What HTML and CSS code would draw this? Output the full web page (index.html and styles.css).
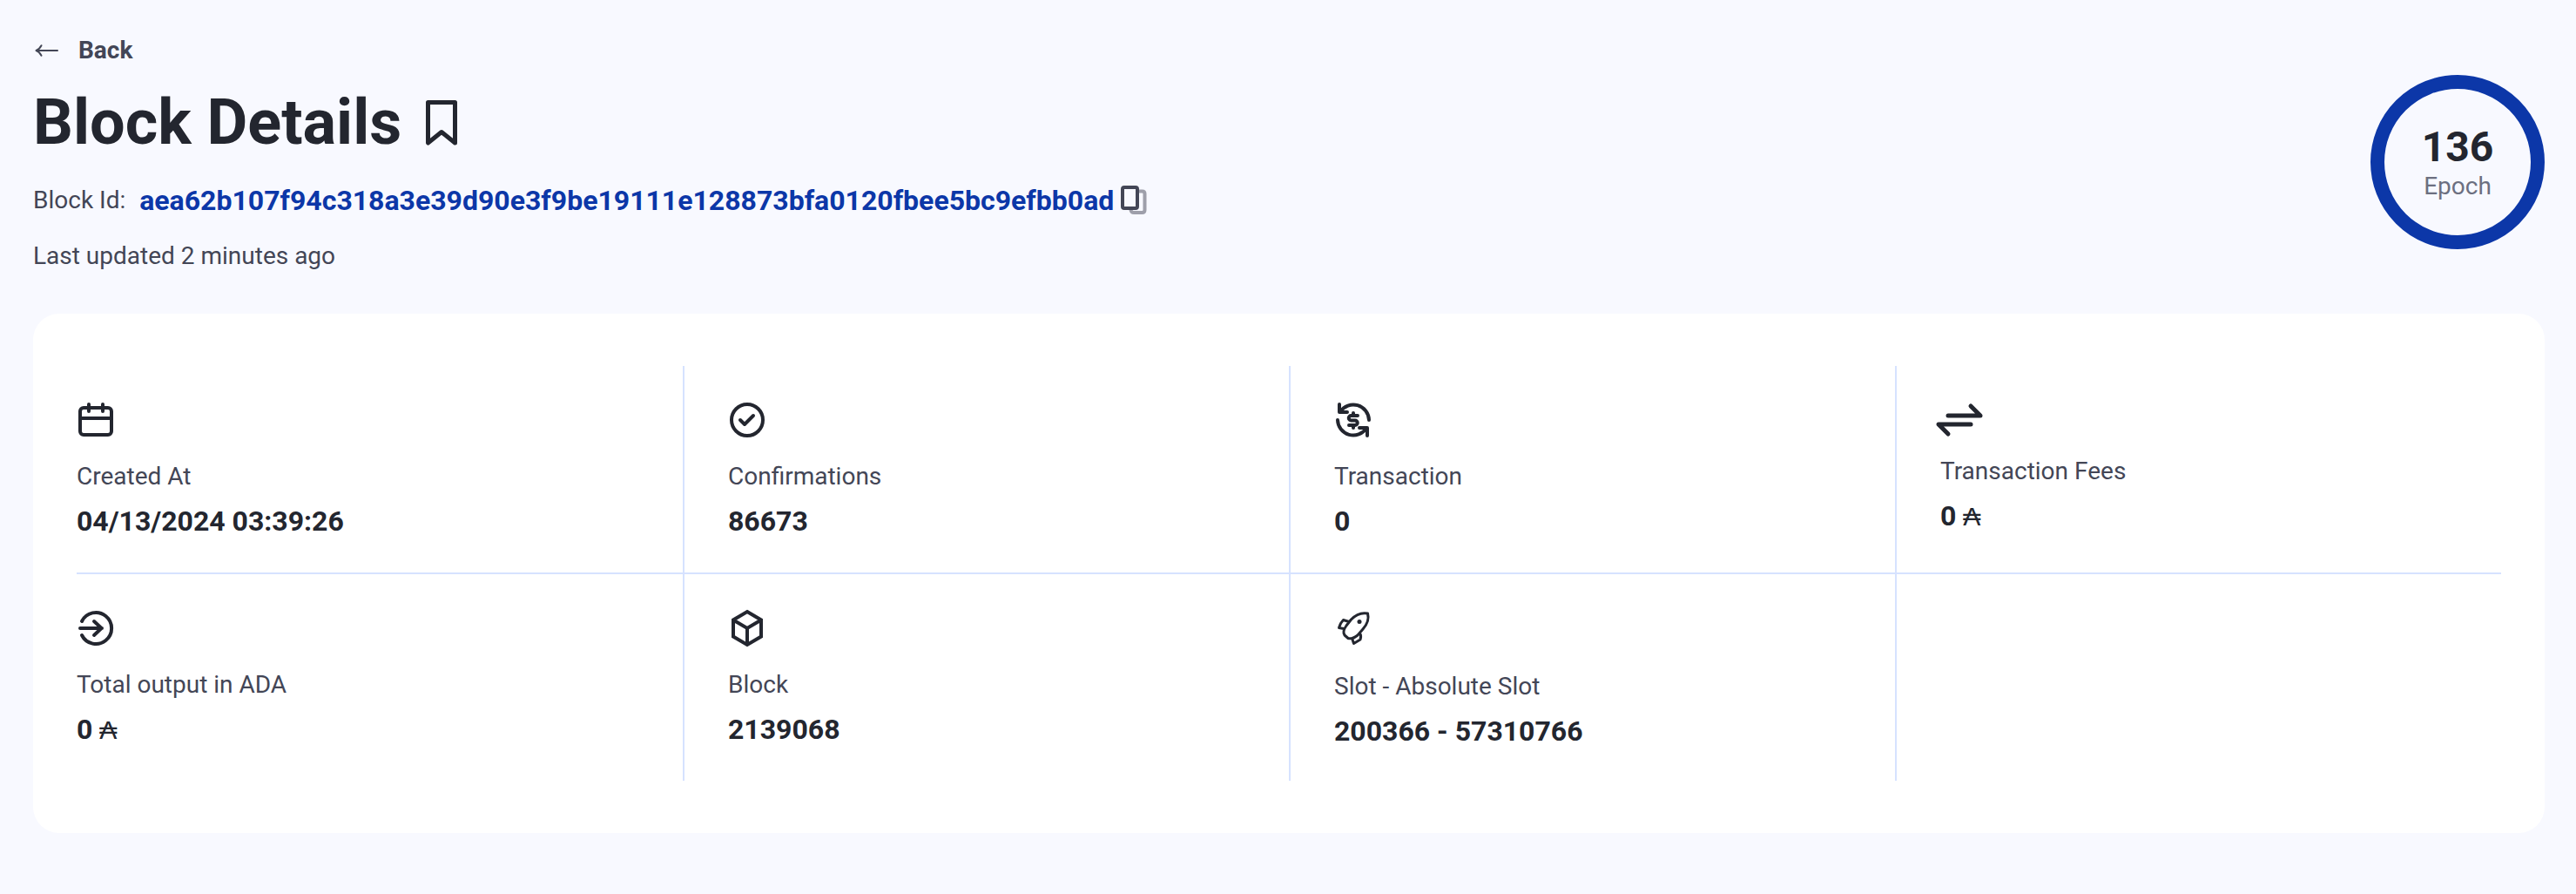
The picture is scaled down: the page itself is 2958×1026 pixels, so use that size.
FILE: index.html
```html
<!DOCTYPE html>
<html lang="en">
<head>
<meta charset="utf-8">
<meta name="viewport" content="width=device-width, initial-scale=1">
<title>Block Details</title>
<link rel="stylesheet" href="styles.css">
</head>
<body>
<main class="page">
  <header class="header">
    <div class="summary">
      <button class="back" type="button">
        <svg class="back-icon" viewBox="0 0 30 14" aria-hidden="true"><path d="M28 7H4M9.500 1.200C8 4 6 6.200 3.500 7C6 7.800 8 10 9.500 12.800"/></svg>
        Back
      </button>
      <div class="title-row">
        <h1 class="title">Block Details</h1>
        <button class="bookmark" type="button" aria-label="Bookmark">
          <svg class="bookmark-icon" viewBox="0 0 36 52"><path d="M2.500 2.500H33.500V49L18 36.500L2.500 49Z"/></svg>
        </button>
      </div>
      <div class="id-row">
        <span class="id-label">Block Id:</span>
        <a class="hash" href="#">aea62b107f94c318a3e39d90e3f9be19111e128873bfa0120fbee5bc9efbb0ad</a>
        <button class="copy" type="button" aria-label="Copy">
          <svg class="copy-icon" viewBox="0 0 30 34"><path class="copy-rear" d="M21 6.500H24.500Q27.500 6.500 27.500 9.500V28Q27.500 31 24.500 31H15Q12 31 11.500 28"/><rect x="2" y="2" width="17" height="24" rx="2"/></svg>
        </button>
      </div>
      <p class="updated">Last updated 2 minutes ago</p>
    </div>
    <div class="epoch">
      <a class="epoch-number" href="#">136</a>
      <span class="epoch-label">Epoch</span>
    </div>
  </header>

  <section class="card">
    <div class="cell">
      <svg class="icon" viewBox="0 0 44 44" aria-hidden="true"><rect x="4" y="8" width="36" height="31" rx="4"/><path d="M4 20H40M14 4V12M30 4V12"/></svg>
      <span class="label">Created At</span>
      <strong class="value">04/13/2024 03:39:26</strong>
    </div>
    <div class="cell">
      <svg class="icon" viewBox="0 0 44 44" aria-hidden="true"><circle cx="22" cy="22" r="18"/><path d="M14 22L19 27L29 17"/></svg>
      <span class="label">Confirmations</span>
      <strong class="value">86673</strong>
    </div>
    <div class="cell">
      <svg class="icon" viewBox="0 0 44 44" aria-hidden="true"><path d="M6 4V13H15M7 12.500A18 18 0 0 1 40 22M38 40V31H29M37 31.500A18 18 0 0 1 4 22"/><path d="M27 17H19.500A2.700 2.700 0 0 0 19.500 22.500H24A2.700 2.700 0 0 1 24 28H17M22 14V17M22 28V31"/></svg>
      <span class="label">Transaction</span>
      <strong class="value">0</strong>
    </div>
    <div class="cell">
      <svg class="icon icon-fees" viewBox="0 0 44 38" aria-hidden="true"><path d="M9 17H46L35 6M35 27H-2L9 38"/></svg>
      <span class="label">Transaction Fees</span>
      <strong class="value">0 <span class="ada">₳</span></strong>
    </div>
    <div class="cell">
      <svg class="icon" viewBox="0 0 44 44" aria-hidden="true"><path d="M6 14A18 18 0 1 1 6 30M4 22H29M20 14L28.500 22L20 30"/></svg>
      <span class="label">Total output in ADA</span>
      <strong class="value">0 <span class="ada">₳</span></strong>
    </div>
    <div class="cell">
      <svg class="icon icon-block" viewBox="0 0 44 44" aria-hidden="true"><path d="M22 3L38 12.500V31.500L22 41L6 31.500V12.500ZM6 12.500L22 22L38 12.500M22 22V41"/></svg>
      <span class="label">Block</span>
      <strong class="value">2139068</strong>
    </div>
    <div class="cell">
      <svg class="icon icon-slot" viewBox="0 0 44 46" aria-hidden="true"><path d="M38.500 5Q28 3 19.500 12L14 19Q9 26 12 30L16 33.500Q21 35 27 30L33 23Q41 14 38.500 5ZM17 14.500L10.500 12.500Q7 16 5.500 21.500L11 22.500M29.500 27.500Q31.500 31 30 35L22.500 39.500L20.500 33.500"/><circle class="dot" cx="29" cy="14.500" r="2.500"/></svg>
      <span class="label">Slot - Absolute Slot</span>
      <strong class="value">200366 - 57310766</strong>
    </div>
    <div class="cell"></div>
  </section>
</main>
</body>
</html>
```
FILE: styles.css
```css
* {
  box-sizing: border-box;
}

body {
  margin: 0;
  background: #f8f9ff;
  color: #434656;
  font-family: Roboto, sans-serif;
  font-size: 28px;
  line-height: 34px;
}

button {
  display: flex;
  padding: 0;
  border: 0;
  background: none;
  color: inherit;
  font: inherit;
  cursor: pointer;
}

a {
  text-decoration: none;
}

svg {
  display: block;
  flex: none;
  overflow: visible;
  fill: none;
  stroke: #23262f;
  stroke-linecap: round;
  stroke-linejoin: round;
}

.page {
  padding: 41px 36px 70px 38px;
}

.header {
  display: flex;
  align-items: flex-start;
  justify-content: space-between;
  margin-bottom: 49px;
}

.summary {
  display: flex;
  flex-direction: column;
  align-items: flex-start;
}

.back {
  align-items: center;
  gap: 22px;
  font-weight: 700;
}

.back-icon {
  width: 30px;
  height: 14px;
  stroke: #434656;
  stroke-width: 2;
}

.title-row {
  display: flex;
  align-items: center;
  gap: 28px;
  margin-top: 24px;
}

.title {
  margin: 0;
  color: #23262f;
  font-size: 72px;
  font-weight: 700;
  line-height: 84px;
}

.bookmark-icon {
  width: 36px;
  height: 52px;
  stroke-width: 5;
}

.id-row {
  display: flex;
  align-items: center;
  margin-top: 28px;
}

.hash {
  margin: 0 8px 0 16px;
  color: #0c37a8;
  font-size: 32px;
  font-weight: 700;
  line-height: 38px;
}

.copy-icon {
  width: 30px;
  height: 34px;
  stroke: #434656;
  stroke-width: 4;
}

.copy-rear {
  opacity: 0.5;
}

.updated {
  margin: 28px 0 0;
}

.epoch {
  display: flex;
  flex-direction: column;
  align-items: center;
  justify-content: center;
  width: 200px;
  height: 200px;
  margin-top: 45px;
  border: 16px solid #0c37a8;
  border-radius: 50%;
}

.epoch-number {
  color: #23262f;
  font-size: 48px;
  font-weight: 700;
  line-height: 56px;
}

.epoch-label {
  color: #6c6f80;
}

.card {
  display: grid;
  grid-template-columns: repeat(4, 1fr);
  padding: 60px 50px;
  border-radius: 30px;
  background: #fff;
}

.cell {
  display: flex;
  flex-direction: column;
  align-items: flex-start;
  padding: 40px 0 38px 50px;
  border-left: 2px solid #d6e2ff;
}

.cell:nth-child(4n + 1) {
  padding-left: 0;
  border-left: 0;
}

.cell:nth-child(-n + 4) {
  padding-bottom: 40px;
  border-bottom: 2px solid #d6e2ff;
}

.icon {
  width: 44px;
  height: 44px;
  margin-bottom: 26px;
  stroke-width: 4;
}

.icon-fees {
  height: 38px;
  stroke-width: 5;
}

.icon-block {
  stroke-linejoin: miter;
}

.icon-slot {
  height: 46px;
  stroke-width: 3;
}

.dot {
  fill: #23262f;
  stroke: none;
}

.value {
  margin-top: 15px;
  color: #23262f;
  font-size: 32px;
  font-weight: 700;
  line-height: 38px;
}

.ada {
  font-size: 30px;
  font-weight: 400;
}
```
